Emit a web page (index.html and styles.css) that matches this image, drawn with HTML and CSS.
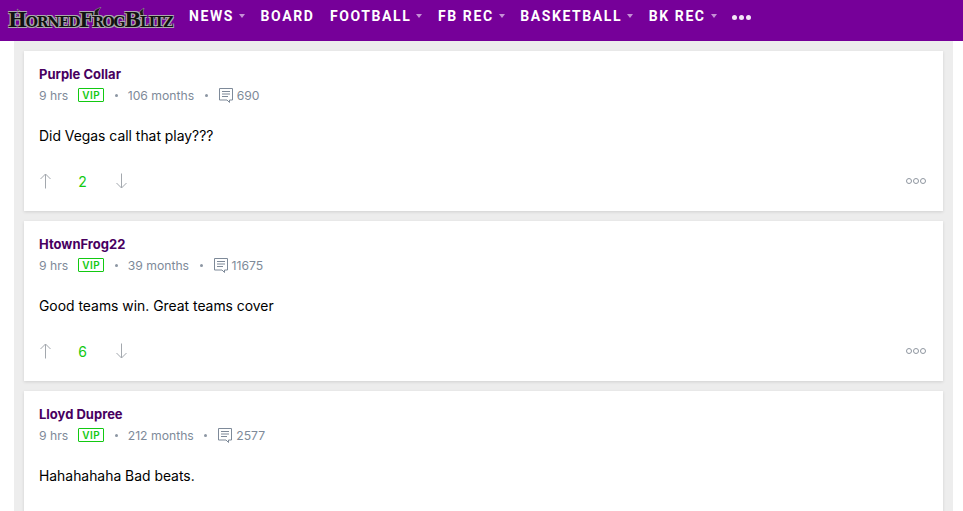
FILE: index.html
```html
<!DOCTYPE html>
<html lang="en">

<head>
    <meta charset="UTF-8">
    <title>Horned Frog Blitz</title>
    <link rel="stylesheet" href="styles.css">
</head>

<body>
    <svg class="sprites" width="0" height="0">
        <symbol id="i-comment" viewBox="0 0 16 17">
            <path d="M1.500 1.500h13v11.500h-3v2.500l-2.500-2.500h-7.500z" fill="none" stroke="currentColor" />
            <path d="M4 4.500h8M4 7h8M4 9.500h6" fill="none" stroke="currentColor" />
        </symbol>
        <symbol id="i-up" viewBox="0 0 13 16">
            <path d="M6.500 15.500V1M1.500 6 6.500 1l5 5" fill="none" stroke="currentColor" />
        </symbol>
        <symbol id="i-down" viewBox="0 0 13 16">
            <path d="M6.500 .5V15M1.500 10l5 5 5-5" fill="none" stroke="currentColor" />
        </symbol>
    </svg>

    <header class="topbar">
        <a class="logo" href="#">
            <svg class="logo-horns" viewBox="0 0 168 20">
                <path d="M6 7 11 10 13 9 9 2 15 6 17 10 13 12zM81 8 86 6 87 3 93 0 90 5 91 9 85 11zM127 9 131 6 132 4 136 1 135 5 136 9 130 11z" fill="#1a1a1a" stroke="#999" stroke-width=".6" />
            </svg>
            <span class="logo-text">HornedFrogBlitz</span>
        </a>
        <nav class="nav">
            <a class="nav-link has-menu" href="#">News</a>
            <a class="nav-link" href="#">Board</a>
            <a class="nav-link has-menu" href="#">Football</a>
            <a class="nav-link has-menu" href="#">FB Rec</a>
            <a class="nav-link has-menu" href="#">Basketball</a>
            <a class="nav-link has-menu" href="#">BK Rec</a>
            <a class="nav-more" href="#"><i></i><i></i><i></i></a>
        </nav>
    </header>

    <main class="feed">
        <article class="post">
            <a class="author" href="#">Purple Collar</a>
            <div class="meta">
                <span>9 hrs</span>
                <span class="vip">VIP</span>
                <span class="dot"></span>
                <span>106 months</span>
                <span class="dot"></span>
                <svg class="icon-comment"><use href="#i-comment" /></svg>
                <span>690</span>
            </div>
            <p class="text">Did Vegas call that play???</p>
            <div class="actions">
                <svg class="arrow"><use href="#i-up" /></svg>
                <span class="score">2</span>
                <svg class="arrow"><use href="#i-down" /></svg>
                <span class="more"><i></i><i></i><i></i></span>
            </div>
        </article>

        <article class="post">
            <a class="author" href="#">HtownFrog22</a>
            <div class="meta">
                <span>9 hrs</span>
                <span class="vip">VIP</span>
                <span class="dot"></span>
                <span>39 months</span>
                <span class="dot"></span>
                <svg class="icon-comment"><use href="#i-comment" /></svg>
                <span>11675</span>
            </div>
            <p class="text">Good teams win. Great teams cover</p>
            <div class="actions">
                <svg class="arrow"><use href="#i-up" /></svg>
                <span class="score">6</span>
                <svg class="arrow"><use href="#i-down" /></svg>
                <span class="more"><i></i><i></i><i></i></span>
            </div>
        </article>

        <article class="post">
            <a class="author" href="#">Lloyd Dupree</a>
            <div class="meta">
                <span>9 hrs</span>
                <span class="vip">VIP</span>
                <span class="dot"></span>
                <span>212 months</span>
                <span class="dot"></span>
                <svg class="icon-comment"><use href="#i-comment" /></svg>
                <span>2577</span>
            </div>
            <p class="text">Hahahahaha Bad beats.</p>
        </article>
    </main>
</body>

</html>
```

FILE: styles.css
```css
html,
body {
    height: 511px;
    overflow: hidden;
}

body {
    margin: 0;
    background-color: #fff;
    font-family: "Inter", "Liberation Sans", sans-serif;
}

a {
    text-decoration: none;
    color: inherit;
}

.sprites {
    display: block;
}

.topbar {
    height: 41px;
    display: flex;
    background-color: #760099;
}

.logo {
    position: relative;
    width: 181px;
    padding: 7px 0 0 8px;
    box-sizing: border-box;
    font-family: "DejaVu Serif", serif;
    font-size: 20px;
    font-weight: bold;
    font-variant: small-caps;
    line-height: 26px;
    letter-spacing: -1.2px;
    white-space: nowrap;
    color: #111;
}

.logo-text {
    position: relative;
    text-shadow: 1px 1px 0 #aaa, -1px -1px 0 #aaa, 1px -1px 0 #aaa, -1px 1px 0 #aaa;
}

.logo-horns {
    position: absolute;
    left: 8px;
    top: 7px;
    width: 168px;
    height: 20px;
}

.nav {
    display: flex;
    gap: 15.5px;
    padding: 6px 0 0 8px;
    height: 20px;
    align-items: center;
}

.nav-link {
    font-family: "Roboto", sans-serif;
    font-size: 14px;
    font-weight: bold;
    letter-spacing: 1.6px;
    text-transform: uppercase;
    color: #fff;
    white-space: nowrap;
}

.has-menu::after {
    content: "";
    display: inline-block;
    margin-left: 5px;
    vertical-align: 3px;
    border-style: solid;
    border-width: 4px 3.5px 0;
    border-color: #c58fd6 transparent transparent;
}

.nav-more {
    display: flex;
    gap: 2px;
    margin-top: 2px;
}

.nav-more i {
    width: 5px;
    height: 5px;
    border-radius: 50%;
    background-color: #f3e6f7;
}

.feed {
    margin: 0 10px 0 14px;
    padding: 10px 10px 0;
    height: 460px;
    overflow: hidden;
    display: flex;
    flex-direction: column;
    gap: 10px;
    background-color: #ededed;
}

.post {
    flex: none;
    height: 160px;
    box-sizing: border-box;
    padding: 14px 15px 0;
    background-color: #fff;
    box-shadow: 0 1px 3px rgba(0, 0, 0, .12);
}

.author {
    display: block;
    font-size: 13px;
    font-weight: bold;
    line-height: 18px;
    color: #48005f;
}

.meta {
    display: flex;
    align-items: center;
    height: 18px;
    margin-top: 3px;
    font-size: 12.2px;
    color: #7e8a99;
}

.vip {
    margin-left: 10px;
    width: 26px;
    height: 14px;
    box-sizing: border-box;
    border: 1px solid #12c912;
    border-radius: 1px;
    font-size: 10px;
    font-weight: 600;
    line-height: 12px;
    letter-spacing: .5px;
    text-align: center;
    color: #12c912;
}

.dot {
    width: 3px;
    height: 3px;
    margin: 0 10px 0 10.5px;
    border-radius: 50%;
    background-color: #8c96a3;
}

.icon-comment {
    width: 16px;
    height: 17px;
    margin-right: 3px;
}

.text {
    margin: 22px 0 0;
    font-size: 13.9px;
    line-height: 20px;
    color: #000;
}

.actions {
    display: flex;
    align-items: center;
    margin-top: 25px;
    height: 20px;
    color: #a3a8ae;
}

.arrow {
    width: 13px;
    height: 16px;
}

.score {
    width: 63px;
    padding-right: 2px;
    box-sizing: border-box;
    text-align: center;
    font-size: 14px;
    color: #12c912;
}

.more {
    margin-left: auto;
    display: flex;
    gap: 1px;
    margin-right: 2px;
}

.more i {
    width: 6px;
    height: 6px;
    box-sizing: border-box;
    border: 1px solid #8f96a0;
    border-radius: 50%;
}
```
